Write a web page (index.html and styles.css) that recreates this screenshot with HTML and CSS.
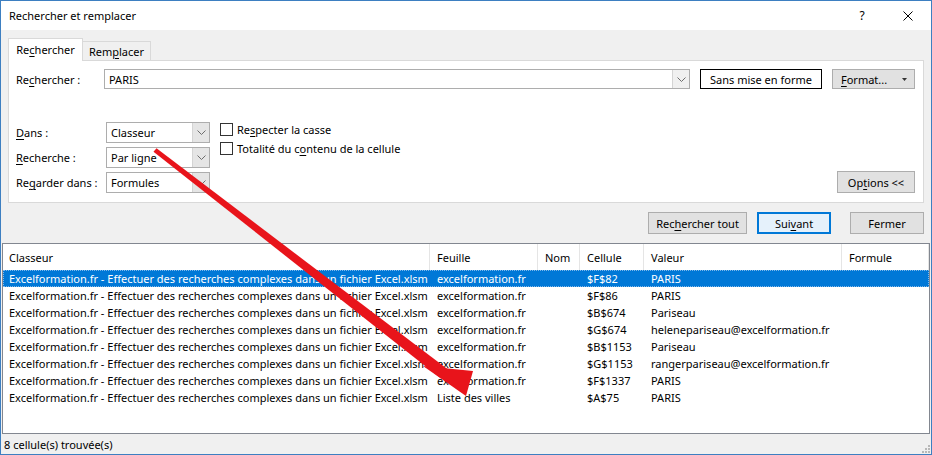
FILE: index.html
```html
<!DOCTYPE html>
<html lang="fr">
<head>
<meta charset="utf-8">
<title>Rechercher et remplacer</title>
<link rel="stylesheet" href="styles.css">
</head>
<body>
<div class="window">
  <div class="titlebar">
    <span class="title">Rechercher et remplacer</span>
    <span class="tb-btn help">?</span>
    <span class="tb-btn close"><svg width="10" height="10" viewBox="0 0 10 10"><path d="M0.5 0.5L9.5 9.5M9.5 0.5L0.5 9.5" stroke="#000" stroke-width="1" fill="none"/></svg></span>
  </div>
  <div class="main">
    <div class="tabs">
      <div class="tab active">Re<u>c</u>hercher</div>
      <div class="tab">Rem<u>p</u>lacer</div>
    </div>
    <div class="panel">
      <div class="search-row">
        <span class="lbl">Re<u>c</u>hercher :</span>
        <div class="combo wide"><span class="val">PARIS</span><span class="dd"><svg width="9" height="5" viewBox="0 0 9 5"><path d="M0.5 0.5L4.5 4.5L8.5 0.5" stroke="#6d6d6d" fill="none"/></svg></span></div>
        <span class="btn nofmt">Sans mise en forme</span>
        <span class="btn fmt"><span><u>F</u>ormat...</span><svg width="5" height="3" viewBox="0 0 5 3"><path d="M0 0H5L2.5 3Z" fill="#333"/></svg></span>
      </div>
      <div class="options">
        <div class="opt-grid">
          <span class="lbl"><u>D</u>ans :</span>
          <div class="combo sel"><span class="val">Classeur</span><span class="dd"><svg width="9" height="5" viewBox="0 0 9 5"><path d="M0.5 0.5L4.5 4.5L8.5 0.5" stroke="#6d6d6d" fill="none"/></svg></span></div>
          <span class="lbl"><u>R</u>echerche :</span>
          <div class="combo sel"><span class="val">Par ligne</span><span class="dd"><svg width="9" height="5" viewBox="0 0 9 5"><path d="M0.5 0.5L4.5 4.5L8.5 0.5" stroke="#6d6d6d" fill="none"/></svg></span></div>
          <span class="lbl">Re<u>g</u>arder dans :</span>
          <div class="combo sel"><span class="val">Formules</span><span class="dd"><svg width="9" height="5" viewBox="0 0 9 5"><path d="M0.5 0.5L4.5 4.5L8.5 0.5" stroke="#6d6d6d" fill="none"/></svg></span></div>
        </div>
        <div class="checks">
          <div class="check"><span class="box"></span><span>Re<u>s</u>pecter la casse</span></div>
          <div class="check"><span class="box"></span><span>Totalité du c<u>o</u>ntenu de la cellule</span></div>
        </div>
        <span class="btn opts">Op<u>t</u>ions &lt;&lt;</span>
      </div>
    </div>
    <div class="actions">
      <span class="btn act all">Rec<u>h</u>ercher tout</span>
      <span class="btn act next">Sui<u>v</u>ant</span>
      <span class="btn act close-btn">Fermer</span>
    </div>
  </div>
  <div class="results">
    <div class="row head">
      <span>Classeur</span><span>Feuille</span><span>Nom</span><span>Cellule</span><span>Valeur</span><span>Formule</span>
    </div>
    <div class="row selected">
      <span>Excelformation.fr - Effectuer des recherches complexes dans un fichier Excel.xlsm</span><span>excelformation.fr</span><span></span><span>$F$82</span><span>PARIS</span><span></span>
    </div>
    <div class="row">
      <span>Excelformation.fr - Effectuer des recherches complexes dans un fichier Excel.xlsm</span><span>excelformation.fr</span><span></span><span>$F$86</span><span>PARIS</span><span></span>
    </div>
    <div class="row">
      <span>Excelformation.fr - Effectuer des recherches complexes dans un fichier Excel.xlsm</span><span>excelformation.fr</span><span></span><span>$B$674</span><span>Pariseau</span><span></span>
    </div>
    <div class="row">
      <span>Excelformation.fr - Effectuer des recherches complexes dans un fichier Excel.xlsm</span><span>excelformation.fr</span><span></span><span>$G$674</span><span>helenepariseau@excelformation.fr</span><span></span>
    </div>
    <div class="row">
      <span>Excelformation.fr - Effectuer des recherches complexes dans un fichier Excel.xlsm</span><span>excelformation.fr</span><span></span><span>$B$1153</span><span>Pariseau</span><span></span>
    </div>
    <div class="row">
      <span>Excelformation.fr - Effectuer des recherches complexes dans un fichier Excel.xlsm</span><span>excelformation.fr</span><span></span><span>$G$1153</span><span>rangerpariseau@excelformation.fr</span><span></span>
    </div>
    <div class="row">
      <span>Excelformation.fr - Effectuer des recherches complexes dans un fichier Excel.xlsm</span><span>excelformation.fr</span><span></span><span>$F$1337</span><span>PARIS</span><span></span>
    </div>
    <div class="row">
      <span>Excelformation.fr - Effectuer des recherches complexes dans un fichier Excel.xlsm</span><span>Liste des villes</span><span></span><span>$A$75</span><span>PARIS</span><span></span>
    </div>
  </div>
  <div class="status">
    <span>8 cellule(s) trouvée(s)</span>
    <svg class="grip" width="9" height="9" viewBox="0 0 9 9" fill="#b8b8b8"><rect x="7" y="1" width="2" height="2"/><rect x="4" y="4" width="2" height="2"/><rect x="7" y="4" width="2" height="2"/><rect x="1" y="7" width="2" height="2"/><rect x="4" y="7" width="2" height="2"/><rect x="7" y="7" width="2" height="2"/></svg>
  </div>
  <svg class="arrow" width="932" height="455" viewBox="0 0 932 455">
    <polygon points="156.5,148.2 448,369.5 441,378.5 153.5,151.8" fill="#e8141b"/>
    <polygon points="466,396 423,366 473,371" fill="#e8141b"/>
  </svg>
</div>
</body>
</html>
```

FILE: styles.css
```css
* { box-sizing: border-box; }
html, body { margin: 0; padding: 0; background: #fff; }
body {
  font-family: "Segoe UI", "Noto Sans", sans-serif;
  font-size: 11px;
  color: #000;
}
u { text-decoration: underline; text-underline-offset: 2px; }

.window {
  position: relative;
  width: 932px;
  height: 455px;
  border: 1px solid #3d7fc1;
  background: #f0f0f0;
  display: flex;
  flex-direction: column;
  overflow: hidden;
}

.titlebar {
  height: 29px;
  flex: none;
  background: #fff;
  display: flex;
  align-items: center;
  padding-left: 8px;
}
.title { flex: 1; }
.tb-btn {
  width: 46px;
  height: 29px;
  display: flex;
  align-items: center;
  justify-content: center;
}
.help { font-size: 12px; }

.main {
  flex: none;
  height: 213px;
  padding: 8px 7px 0 7px;
  display: flex;
  flex-direction: column;
}

.tabs {
  height: 22px;
  display: flex;
  align-items: flex-end;
}
.tab {
  height: 19px;
  width: 69px;
  border: 1px solid #d9d9d9;
  border-bottom: none;
  display: flex;
  align-items: center;
  justify-content: center;
  background: #f0f0f0;
  margin-left: -1px;
}
.tab.active {
  width: 75px;
  height: 23px;
  margin-left: 0;
  margin-bottom: -1px;
  background: #fff;
  position: relative;
  z-index: 1;
  padding-bottom: 2px;
}

.panel {
  height: 143px;
  background: #fff;
  border: 1px solid #d9d9d9;
  padding: 8px 8px 0 7px;
}

.search-row {
  display: flex;
  align-items: center;
  height: 20px;
}
.lbl { white-space: nowrap; }
.search-row .lbl { width: 88px; }

.combo {
  display: flex;
  background: #fff;
  border: 1px solid #adadad;
}
.combo .val {
  flex: 1;
  display: flex;
  align-items: center;
  padding-left: 4px;
}
.combo .dd {
  width: 17px;
  display: flex;
  align-items: center;
  justify-content: center;
  background: #e5e5e5;
  border-left: 1px solid #d4d4d4;
}
.combo.wide { width: 586px; height: 20px; }
.combo.wide .dd { background: #f0f0f0; }

.btn {
  display: flex;
  align-items: center;
  justify-content: center;
  background: #e1e1e1;
  border: 1px solid #adadad;
  white-space: nowrap;
}
.nofmt {
  margin-left: 10px;
  width: 122px;
  height: 20px;
  background: #fff;
  border-color: #000;
}
.fmt {
  margin-left: 10px;
  width: 83px;
  height: 20px;
  justify-content: space-between;
  padding: 0 7px 0 8px;
}

.options {
  margin-top: 33px;
  display: flex;
  align-items: flex-start;
}
.opt-grid {
  display: grid;
  grid-template-columns: 90px 104px;
  grid-auto-rows: 21px;
  row-gap: 4px;
  align-items: center;
}
.combo.sel { height: 21px; }

.checks {
  margin-left: 10px;
  margin-top: -2px;
  display: flex;
  flex-direction: column;
}
.check {
  display: flex;
  align-items: center;
  height: 19px;
  gap: 4px;
}
.box {
  width: 13px;
  height: 13px;
  border: 1px solid #333;
  background: #fff;
}
.opts {
  margin-left: auto;
  margin-top: 49px;
  width: 78px;
  height: 22px;
}

.actions {
  margin-top: 9px;
  display: flex;
  justify-content: flex-end;
  height: 22px;
}
.act { height: 22px; }
.all { width: 99px; }
.next {
  width: 74px;
  margin-left: 10px;
  border: 2px solid #0078d7;
  background: #e5f1fb;
}
.close-btn { width: 74px; margin-left: 19px; }

.results {
  flex: none;
  height: 191px;
  margin: 0 1px;
  background: #fff;
  border: 1px solid #828790;
}
.row {
  display: grid;
  grid-template-columns: 427px 108px 42px 64px 198px 1fr;
  height: 17px;
  align-items: center;
}
.row > span {
  padding-left: 6px;
  white-space: nowrap;
  overflow: hidden;
}
.row.head { height: 26px; align-items: stretch; }
.row.head > span {
  display: flex;
  align-items: center;
  border-right: 1px solid #e5e5e5;
}
.row > span:not(:first-child) { padding-left: 7px; }
.row.selected {
  background: #0078d7;
  color: #fff;
  outline: 1px dotted #7fb8ea;
  outline-offset: -1px;
}

.status {
  flex: 1;
  display: flex;
  align-items: center;
  justify-content: space-between;
  padding: 0 1px 0 3px;
}
.grip { align-self: flex-end; margin-bottom: 1px; }

.arrow {
  position: absolute;
  left: -1px;
  top: -1px;
  pointer-events: none;
}
```
